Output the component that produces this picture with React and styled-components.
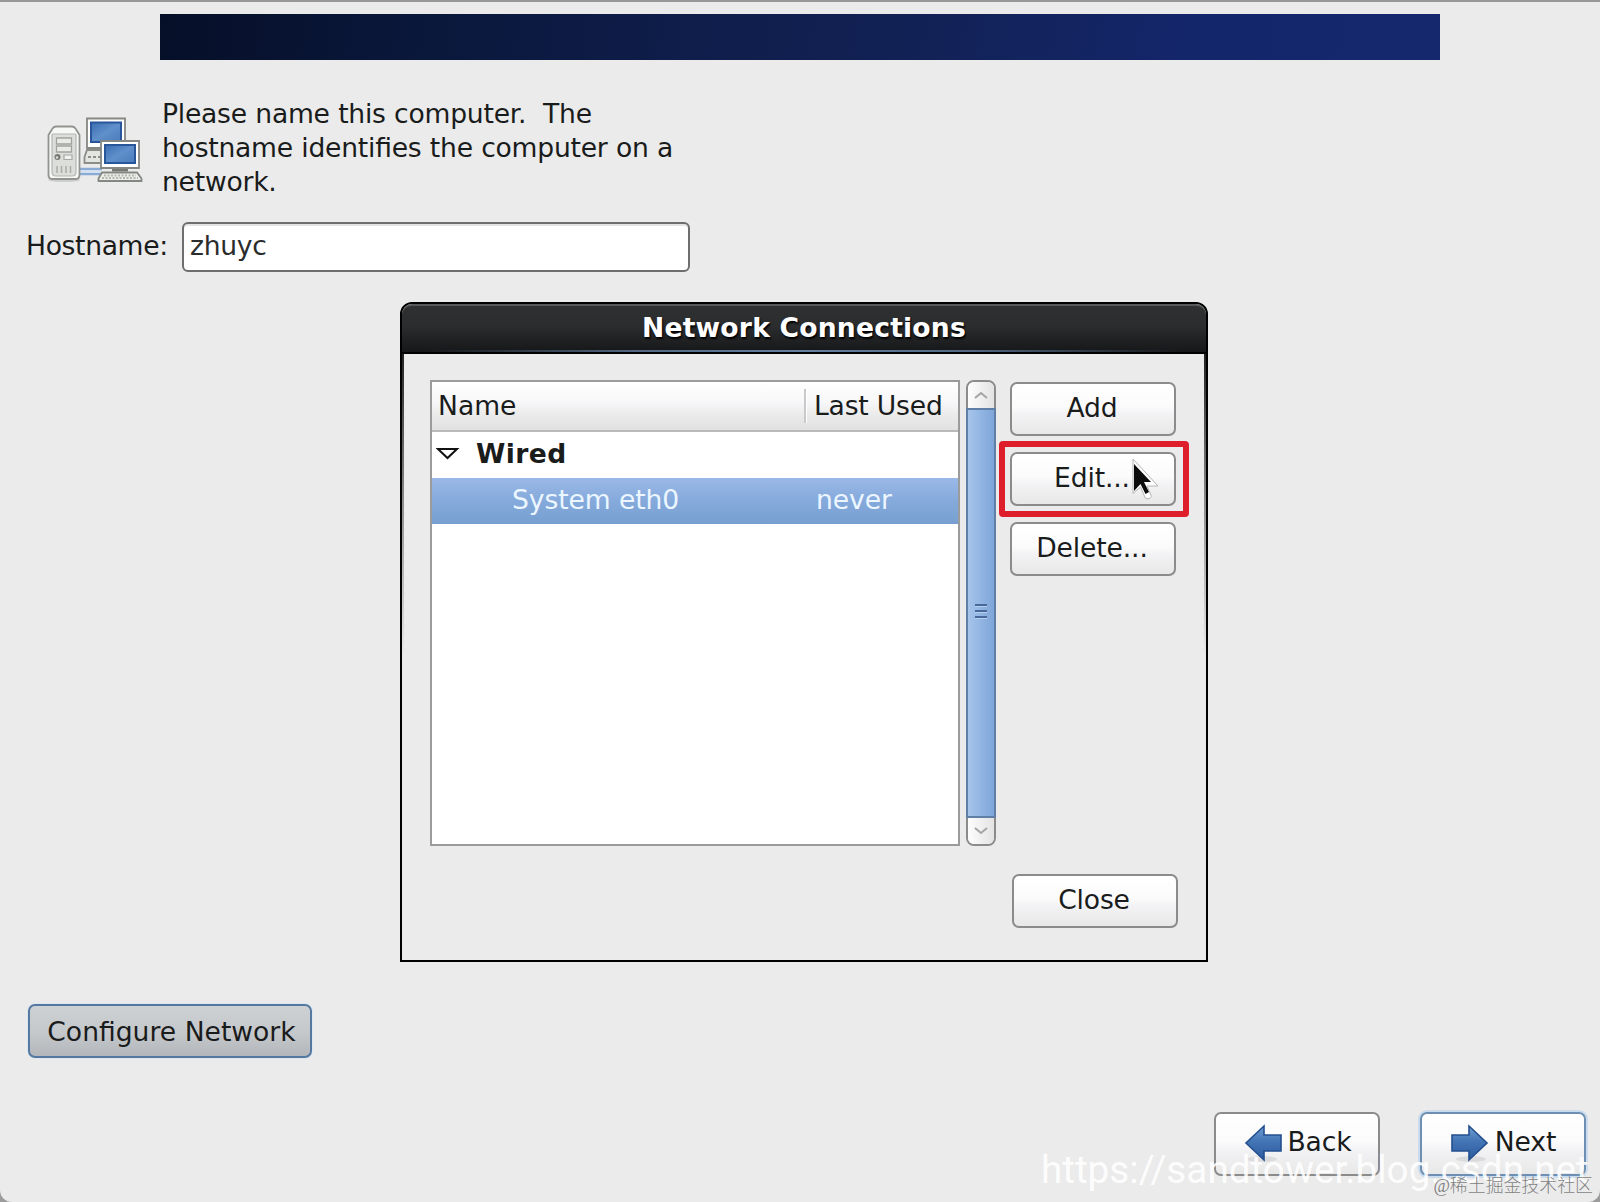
import React from "react";
import styled, { createGlobalStyle, css } from "styled-components";

const GlobalStyle = createGlobalStyle`
  * { box-sizing: border-box; }
  html, body { margin: 0; padding: 0; background: #9c9c9c; overflow: hidden; }
  body { font-family: "DejaVu Sans", sans-serif; font-size: 26.6px; color: #1a1c1c; }
`;

const Screen = styled.main`
  position: relative;
  display: flex;
  flex-direction: column;
  width: 1600px;
  height: 1202px;
  padding-top: 12px;
  border-top: 2px solid #979797;
  border-radius: 0 0 12px 12px;
  background: #ebebeb;
  overflow: hidden;
`;

const Banner = styled.header`
  flex: none;
  width: 1280px;
  height: 46px;
  margin: 0 auto;
  background: linear-gradient(100deg, #060f28 0%, #0a183c 22%, #0e1d49 40%, #122154 58%, #14266a 80%, #15286e 100%);
`;

const Intro = styled.section`
  display: flex;
  align-items: flex-start;
  gap: 18px;
  height: 136px;
  margin-top: 37px;
  padding: 0 0 0 44px;
`;

const IntroIcon = styled.svg`
  width: 100px;
  height: 72px;
  margin-top: 20px;
  flex: none;
`;

const IntroText = styled.p`
  margin: 0;
  line-height: 34px;
  letter-spacing: -0.24px;
  word-spacing: 0.2px;
  font-feature-settings: "liga" 1;
  white-space: pre;
`;

const HostRow = styled.label`
  display: flex;
  align-items: center;
  gap: 14px;
  margin-top: -11px;
  padding-left: 26px;
  height: 50px;
`;

const HostLabel = styled.span`
  width: 142px;
  padding-bottom: 2px;
  line-height: 34px;
  letter-spacing: -0.35px;
  white-space: nowrap;
`;

const HostInput = styled.input`
  width: 508px;
  height: 50px;
  padding: 0 6px 3px;
  border: 2px solid #6e6e6e;
  border-radius: 6px;
  background: #fff;
  box-shadow: inset 0 2px 0 #e4e4e4;
  font: inherit;
  letter-spacing: -0.3px;
  color: #2b2d2d;
  outline: none;
`;

const Button = styled.button`
  display: flex;
  align-items: center;
  justify-content: center;
  flex: none;
  width: ${(p) => p.$width || 166}px;
  height: ${(p) => p.$height || 54}px;
  padding: 0 2px 2px 0;
  border: 2px solid #8b8b8b;
  border-radius: 7px;
  background: linear-gradient(#ffffff 0%, #fbfbfc 45%, #f2f2f4 62%, #e8e8e8 100%);
  font: inherit;
  line-height: 34px;
  letter-spacing: -0.15px;
  color: #1a1c1c;
  white-space: nowrap;
  ${(p) => p.$height && css`
    padding: 0 0 4px 1px;
  `}
  ${(p) => p.$pressed && css`
    padding: 2px 0 0 3px;
    border-color: #54789f;
    background: linear-gradient(#ced1d4 0%, #c5c8cb 55%, #b3b6ba 100%);
    box-shadow: 0 0 0 1px #dce7f2;
    letter-spacing: 0;
  `}
  ${(p) => p.$focused && css`
    border-color: #6d8fb3;
    box-shadow: 0 0 0 2px #c9dbec;
  `}
`;

const ConfigureBar = styled.div`
  margin: 732px 0 0 28px;
`;

const NavBar = styled.footer`
  display: flex;
  justify-content: flex-end;
  gap: 40px;
  margin-top: 54px;
  padding-right: 14px;
`;

const ArrowIcon = styled.svg`
  flex: none;
  width: 38px;
  height: 40px;
  margin: 2px 6px 0 0;
  transform: ${(p) => (p.$flip ? "scaleX(-1)" : "none")};
`;

const Dialog = styled.section`
  position: absolute;
  left: 400px;
  top: 300px;
  display: flex;
  flex-direction: column;
  width: 808px;
  height: 660px;
  border: 2px solid #000;
  border-radius: 12px 12px 0 0;
  background: #ebebeb;
`;

const TitleBar = styled.h1`
  position: relative;
  display: flex;
  justify-content: center;
  flex: none;
  height: 50px;
  margin: 0;
  padding-top: 5px;
  border-radius: 10px 10px 0 0;
  border-top: 2px solid #575858;
  border-bottom: 2px solid #000;
  background: linear-gradient(#2f3032 0%, #2b2c2e 45%, #161718 100%);
  font-size: 26.6px;
  line-height: 34px;
  letter-spacing: 0.2px;
  font-weight: bold;
  color: #fff;
  text-shadow: 1px 2px 2px #000;
  &::after {
    content: "";
    position: absolute;
    left: 0;
    right: 0;
    bottom: 0;
    height: 2px;
    background: linear-gradient(90deg, transparent 3%, #536985 30%, #6680a0 50%, #536985 70%, transparent 97%);
  }
`;

const DialogBody = styled.div`
  position: relative;
  display: flex;
  flex: 1;
  padding: 26px 0 0 26px;
  border: solid transparent;
  border-width: 0 2px;
  border-image: linear-gradient(#222 0%, #8d8d8d 25%, #ebebeb 50%) 1;
`;

const TreeView = styled.div`
  width: 530px;
  height: 466px;
  border: 2px solid #9b9b9b;
  background: #fff;
`;

const TreeHeader = styled.div`
  display: flex;
  align-items: center;
  height: 50px;
  border-bottom: 2px solid #bababa;
  background: linear-gradient(#ffffff 0%, #f6f6f8 45%, #ececec 65%, #e1e1e1 100%);
`;

const HeaderName = styled.span`
  width: 372px;
  padding: 0 0 0 6px;
  line-height: 34px;
`;

const HeaderUsed = styled.span`
  padding: 0 0 0 8px;
  border-left: 2px solid #c9c9c9;
  box-shadow: inset 1px 0 0 #fff;
  line-height: 34px;
  letter-spacing: -0.2px;
  white-space: nowrap;
`;

const TreeRow = styled.div`
  display: flex;
  align-items: center;
  height: 46px;
  padding: 0 0 4px 4px;
  ${(p) => p.$selected && css`
    padding-left: 80px;
    color: #ecf6ff;
    letter-spacing: -0.1px;
    background: linear-gradient(#9bb9e8 0%, #86abdc 45%, #769fd0 100%);
  `}
`;

const Expander = styled.svg`
  width: 24px;
  height: 16px;
  margin: 2px 16px 0 0;
`;

const CellGroup = styled.b`
  letter-spacing: 0.4px;
`;

const CellName = styled.span`
  width: 304px;
  white-space: nowrap;
`;

const Scrollbar = styled.div`
  display: flex;
  flex-direction: column;
  width: 30px;
  height: 466px;
  margin-left: 6px;
  border: 2px solid #8b8b8b;
  border-radius: 8px;
  background: #eee;
`;

const ScrollEnd = styled.div`
  display: flex;
  align-items: center;
  justify-content: center;
  height: 26px;
  border-radius: ${(p) => (p.$bottom ? "0 0 6px 6px" : "6px 6px 0 0")};
  background: linear-gradient(90deg, #fdfdfd, #e3e3e3);
`;

const Chevron = styled.svg`
  width: 16px;
  height: 10px;
`;

const Thumb = styled.div`
  display: flex;
  flex-direction: column;
  align-items: center;
  justify-content: center;
  gap: 4px;
  flex: 1;
  margin: 0 -2px;
  padding-bottom: 4px;
  border: 2px solid #607fa7;
  background: linear-gradient(90deg, #a7c4eb 0%, #95b8e4 40%, #7fa6d9 100%);
`;

const Grip = styled.i`
  width: 12px;
  height: 2px;
  background: #48689a;
  box-shadow: 0 1px 0 #b5cdee;
`;

const Actions = styled.div`
  display: flex;
  flex-direction: column;
  gap: 16px;
  height: 548px;
  margin-left: 14px;
  padding-top: 2px;
`;

const CloseSlot = styled.div`
  margin: auto 0 0 2px;
`;

const Highlight = styled.div`
  position: absolute;
  left: 999px;
  top: 439px;
  width: 190px;
  height: 76px;
  border: 6px solid #de1f2b;
  border-radius: 4px;
`;

const Cursor = styled.svg`
  position: absolute;
  left: 1130px;
  top: 456px;
  width: 32px;
  height: 44px;
`;

const BlogMark = styled.div`
  position: absolute;
  left: 1041px;
  top: 1144px;
  font-family: Roboto, sans-serif;
  font-size: 38.7px;
  line-height: 48px;
  color: rgba(255, 255, 255, 0.88);
  white-space: nowrap;
`;

const CommunityMark = styled.div`
  position: absolute;
  right: 7px;
  bottom: 3px;
  font-family: "Liberation Serif", "Noto Sans CJK SC", serif;
  font-size: 17.9px;
  font-weight: 300;
  line-height: 26px;
  color: rgba(115, 115, 115, 0.9);
  white-space: nowrap;
`;

function NetworkIcon() {
  return (
    <IntroIcon viewBox="0 0 100 72" aria-hidden="true">
      <defs>
        <linearGradient id="screen" x1="0" y1="0" x2="1" y2="1">
          <stop offset="0" stopColor="#3b6db2" />
          <stop offset="0.5" stopColor="#5f90cb" />
          <stop offset="1" stopColor="#4a7bbd" />
        </linearGradient>
      </defs>
      <path d="M35 52H58M35 57H58" stroke="#8aabd6" strokeWidth="2.500" />
      <path d="M36 54.500H57" stroke="#d4e2f3" strokeWidth="2" />
      <ellipse cx="20" cy="63" rx="16" ry="2" fill="#000" opacity="0.12" />
      <path d="M12 9.500h16q2 0 3.500 2l4 6.500v40q0 4-4 4h-23q-4 0-4-4V18l4-6.500q1.500-2 3.500-2z" fill="#f7f8f6" stroke="#92948f" strokeWidth="1.800" />
      <path d="M9 17h22q1 0 1 1v37q0 4-4 4H12q-4 0-4-4V18q0-1 1-1z" fill="#dcdeda" stroke="#b4b6b2" strokeWidth="1.200" />
      <path d="M12.500 21h15v6h-15zM12.500 29h15v6h-15z" fill="#e9ebe7" stroke="#a2a49f" strokeWidth="1.300" />
      <circle cx="13.500" cy="40" r="3" fill="#777974" />
      <circle cx="13" cy="40.500" r="1.200" fill="#dedfdd" />
      <path d="M20 38h8v4.500h-8z" fill="#f2f3f0" stroke="#a5a7a2" strokeWidth="1.200" />
      <path d="M13 49v7M17.500 49v7M22 49v7M26.500 49v7" stroke="#a9aba6" strokeWidth="1.500" />
      <path d="M43 33h16v13H40.500V40z" fill="#e3e5e1" stroke="#8b8d88" strokeWidth="1.800" />
      <path d="M44 40h13" stroke="#8c8e89" strokeWidth="2" strokeDasharray="3 2" />
      <path d="M43 1.500h38V31H43z" fill="#fff" stroke="#858783" strokeWidth="1.800" />
      <path d="M47 5.500h30V25H47z" fill="url(#screen)" stroke="#29559a" strokeWidth="2" />
      <path d="M57 24h38v27H57z" fill="#fff" stroke="#858783" strokeWidth="1.800" />
      <path d="M61 28h30v18H61z" fill="url(#screen)" stroke="#29559a" strokeWidth="2" />
      <path d="M68 52h16v2.500H68z" fill="#777974" />
      <path d="M58 55.500h35l4.500 6v2.500h-43v-2.500z" fill="#eceeea" stroke="#858783" strokeWidth="1.800" />
      <path d="M60 58.500h32M58 61h36" stroke="#b3b5b0" strokeWidth="1.800" strokeDasharray="2 1.500" />
    </IntroIcon>
  );
}

function Arrow({ flip }) {
  const id = flip ? "arrow-back" : "arrow-next";
  return (
    <ArrowIcon $flip={flip} viewBox="0 0 38 40" aria-hidden="true">
      <defs>
        <linearGradient id={id} x1="0" y1="0" x2="0" y2="1">
          <stop offset="0" stopColor="#6f9fd3" />
          <stop offset="0.45" stopColor="#4374b4" />
          <stop offset="1" stopColor="#2d5c9f" />
        </linearGradient>
      </defs>
      <ellipse cx="20" cy="36" rx="15" ry="3" fill="#000" opacity="0.08" />
      <path d="M1 12h17V3l18 17-18 17v-9H1z" fill={`url(#${id})`} stroke="#234f8f" strokeWidth="1.600" />
    </ArrowIcon>
  );
}

function ScrollArrow({ down }) {
  return (
    <Chevron viewBox="0 0 16 10" aria-hidden="true">
      <path d={down ? "M2 2l6 5 6-5" : "M2 8l6-5 6 5"} fill="none" stroke="#a4a4a4" strokeWidth="2" />
    </Chevron>
  );
}

function NetworkDialog() {
  return (
    <Dialog>
      <TitleBar>Network Connections</TitleBar>
      <DialogBody>
        <TreeView>
          <TreeHeader>
            <HeaderName>Name</HeaderName>
            <HeaderUsed>Last Used</HeaderUsed>
          </TreeHeader>
          <TreeRow>
            <Expander viewBox="0 0 24 16" aria-hidden="true">
              <path d="M2 3h19l-9.500 9z" fill="#fff" stroke="#111" strokeWidth="2" />
            </Expander>
            <CellGroup>Wired</CellGroup>
          </TreeRow>
          <TreeRow $selected>
            <CellName>System eth0</CellName>
            <span>never</span>
          </TreeRow>
        </TreeView>
        <Scrollbar>
          <ScrollEnd><ScrollArrow /></ScrollEnd>
          <Thumb><Grip /><Grip /><Grip /></Thumb>
          <ScrollEnd $bottom><ScrollArrow down /></ScrollEnd>
        </Scrollbar>
        <Actions>
          <Button>Add</Button>
          <Button>Edit...</Button>
          <Button>Delete...</Button>
          <CloseSlot><Button>Close</Button></CloseSlot>
        </Actions>
      </DialogBody>
    </Dialog>
  );
}

export default function App() {
  return (
    <>
      <GlobalStyle />
      <Screen>
        <Banner />
        <Intro>
          <NetworkIcon />
          <IntroText>{"Please name this computer.  The\nhostname identifies the computer on a\nnetwork."}</IntroText>
        </Intro>
        <HostRow>
          <HostLabel>Hostname:</HostLabel>
          <HostInput defaultValue="zhuyc" spellCheck={false} />
        </HostRow>
        <ConfigureBar>
          <Button $pressed $width={284}>Configure Network</Button>
        </ConfigureBar>
        <NavBar>
          <Button $height={64}><Arrow flip />Back</Button>
          <Button $height={64} $focused><Arrow />Next</Button>
        </NavBar>
        <NetworkDialog />
        <Highlight />
        <Cursor viewBox="0 0 32 44" aria-hidden="true">
          <path d="M3 1v34.500l7.500-6.500 5 11.500q4 1.500 6-2l-4.500-10.500h11z" fill="#fff" stroke="#b5b5b5" strokeWidth="1" />
          <path d="M4 6v27l6.500-7 5 10 3.500-2-5-10h7z" fill="#0c0c0c" />
        </Cursor>
        <BlogMark>https://sandtower.blog.csdn.net</BlogMark>
        <CommunityMark>@稀土掘金技术社区</CommunityMark>
      </Screen>
    </>
  );
}
